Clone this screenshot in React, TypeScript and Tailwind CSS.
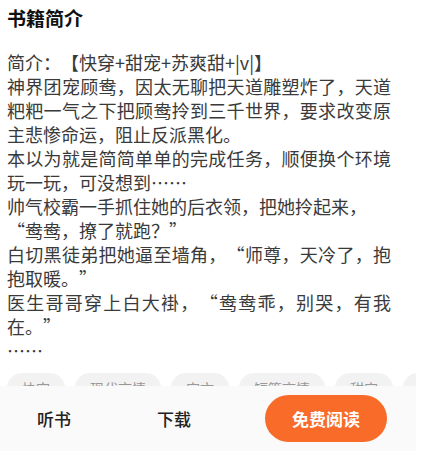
import React from "react";

const tags = ["快穿", "现代言情", "宠文", "短篇言情", "甜宠", "系统"];

export default function App() {
  return (
    <div
      className="relative w-[424px] h-[454px] overflow-hidden bg-white [text-spacing-trim:space-all]"
      style={{ fontFamily: '"Noto Sans CJK SC", "Noto Sans", sans-serif' }}
    >
      <div className="pl-[7px] pt-[5px]">
        <h2 className="text-[19px] font-bold leading-[26px] text-[#111]">书籍简介</h2>
        <div className="mt-[19px] w-[384px] text-justify text-[18px] leading-[24px] text-[#3a3a3a]">
          <p>简介：【快穿+甜宠+苏爽甜+|v|】</p>
          <p>神界团宠顾鸯，因太无聊把天道雕塑炸了，天道粑粑一气之下把顾鸯拎到三千世界，要求改变原主悲惨命运，阻止反派黑化。</p>
          <p>本以为就是简简单单的完成任务，顺便换个环境玩一玩，可没想到……</p>
          <p>帅气校霸一手抓住她的后衣领，把她拎起来，</p>
          <p>“鸯鸯，撩了就跑？”</p>
          <p>白切黑徒弟把她逼至墙角，“师尊，天冷了，抱抱取暖。”</p>
          <p>医生哥哥穿上白大褂，“鸯鸯乖，别哭，有我在。”</p>
          <p>……</p>
        </div>
        <div className="mt-[11px] flex w-[409px] gap-[10px] overflow-hidden whitespace-nowrap">
          {tags.map((t) => (
            <span
              key={t}
              className="flex h-[30px] shrink-0 items-center rounded-full bg-[#f2f2f2] px-[15px] text-[14px] text-[#999]"
            >
              {t}
            </span>
          ))}
        </div>
      </div>

      <div className="absolute left-0 top-[386px] flex h-[65px] w-[416px] items-center bg-[#fafafa] pl-[37px] pr-[29px]">
        <span className="text-[17px] font-medium text-[#222]">听书</span>
        <span className="ml-[86px] text-[17px] font-medium text-[#222]">下载</span>
        <button className="ml-auto flex h-[47px] w-[122px] items-center justify-center rounded-full bg-[#f86b28] text-[17px] font-bold text-white">
          免费阅读
        </button>
      </div>
    </div>
  );
}
